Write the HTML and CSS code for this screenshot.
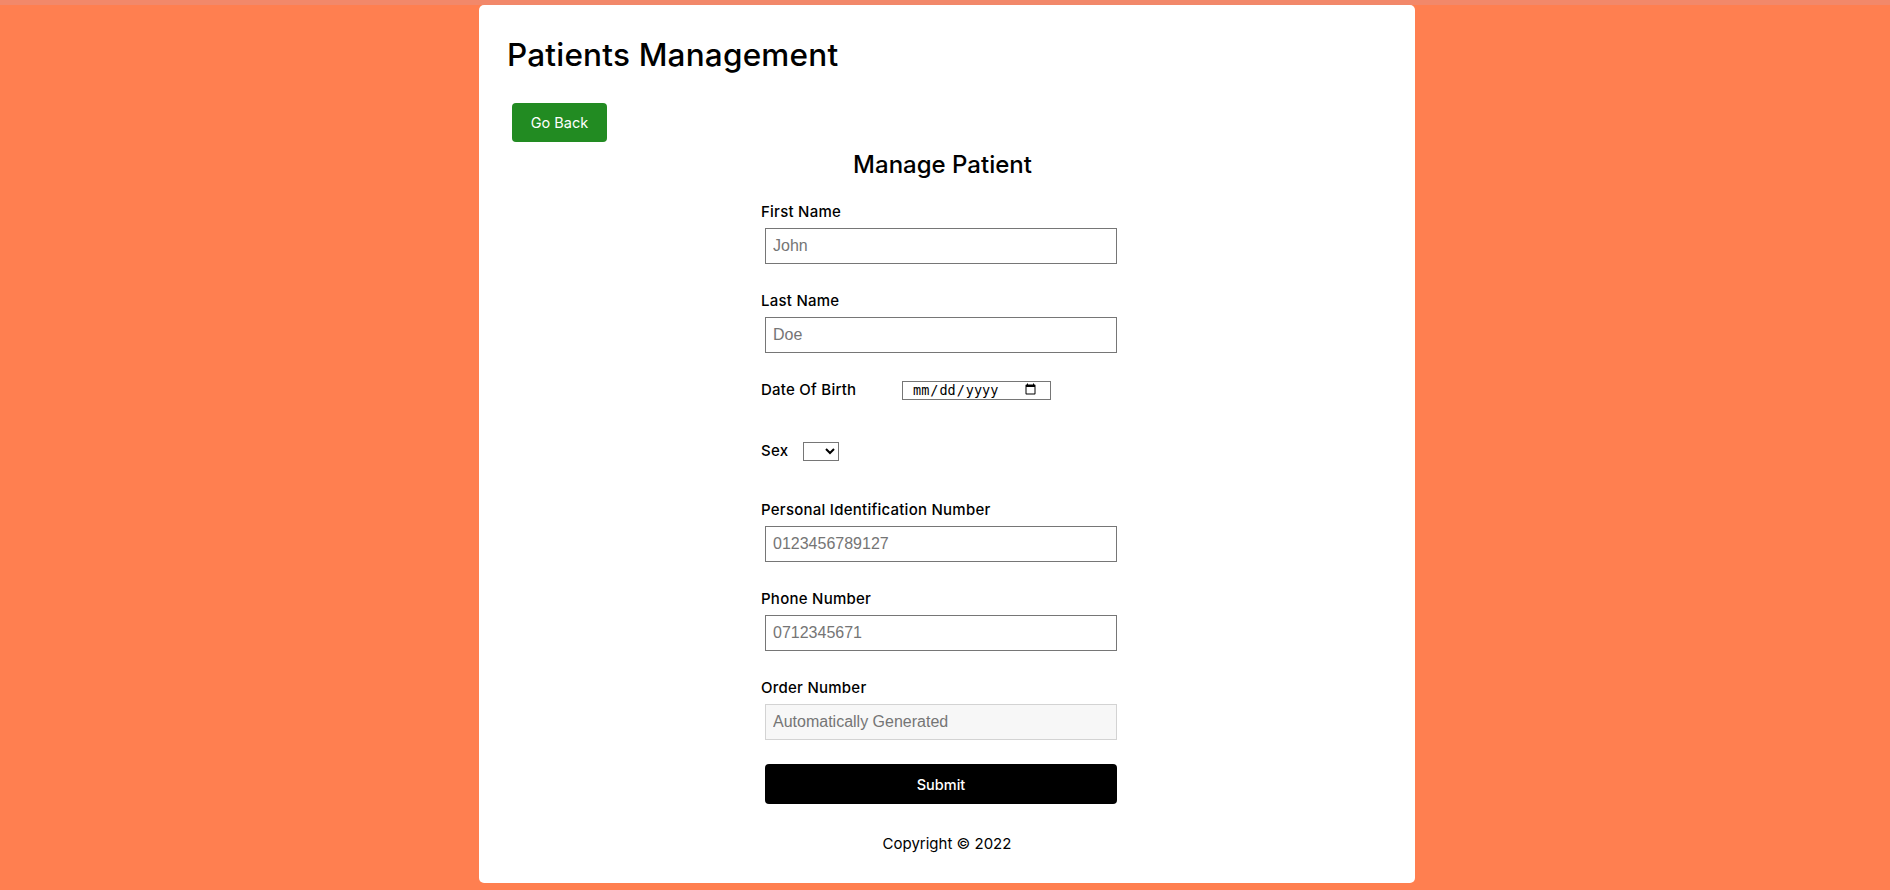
FILE: index.html
```html
<!DOCTYPE html>
<html lang="en">
<head>
<meta charset="utf-8">
<title>Patients Management</title>
<link rel="stylesheet" href="styles.css">
</head>
<body>
<div class="card">
  <h1 class="title">Patients Management</h1>
  <button class="back" type="button">Go Back</button>
  <form class="form">
    <h2 class="form-title">Manage Patient</h2>
    <div class="field">
      <label class="lbl">First Name</label>
      <input class="txt" type="text" placeholder="John">
    </div>
    <div class="field">
      <label class="lbl">Last Name</label>
      <input class="txt" type="text" placeholder="Doe">
    </div>
    <div class="row row-dob">
      <label class="lbl lbl-dob">Date Of Birth</label>
      <input class="date" type="date">
    </div>
    <div class="row row-sex">
      <label class="lbl lbl-sex">Sex</label>
      <select class="sel"></select>
    </div>
    <div class="field">
      <label class="lbl">Personal Identification Number</label>
      <input class="txt" type="text" placeholder="0123456789127">
    </div>
    <div class="field">
      <label class="lbl">Phone Number</label>
      <input class="txt" type="text" placeholder="0712345671">
    </div>
    <div class="field field-last">
      <label class="lbl">Order Number</label>
      <input class="txt" type="text" placeholder="Automatically Generated" disabled>
    </div>
    <button class="submit" type="button">Submit</button>
  </form>
  <footer class="copy">Copyright © 2022</footer>
</div>
</body>
</html>
```

FILE: styles.css
```css
html, body {
  margin: 0;
  padding: 0;
}
body {
  background: linear-gradient(#f2886a 0, #f2886a 5px, #ff7f50 5px) #ff7f50;
  padding: 5px 0 7px 4px;
  font-family: Inter, "Noto Sans", sans-serif;
  color: #000;
  box-sizing: border-box;
  height: 890px;
  overflow: hidden;
}
.card {
  width: 936px;
  height: 878px;
  margin: 0 auto;
  background: #fff;
  border-radius: 5px;
  padding: 30px 28px 0;
  box-sizing: border-box;
}
.title {
  margin: 0;
  font-size: 31.5px;
  font-weight: 500;
  line-height: 40px;
  letter-spacing: 0.2px;
}
.back {
  display: block;
  margin: 28px 0 0 5px;
  width: 95px;
  height: 39px;
  border: 0;
  border-radius: 4px;
  background: #228b22;
  color: #fff;
  font-family: Inter, "Noto Sans", sans-serif;
  font-size: 14.5px;
  font-weight: 400;
}
.form {
  display: block;
  width: 363px;
  margin: 8px 0 0 254px;
}
.form-title {
  margin: 0 0 21px;
  text-align: center;
  font-size: 24px;
  font-weight: 500;
  line-height: 30px;
}
.lbl {
  display: block;
  font-size: 15px;
  font-weight: 500;
  line-height: 22px;
  letter-spacing: 0.25px;
}
.field {
  margin-bottom: 26px;
}
.txt {
  display: block;
  box-sizing: border-box;
  width: 352px;
  height: 36px;
  margin: 5px 0 0 4px;
  padding: 0 7px;
  border: 1px solid #767676;
  border-radius: 0;
  font-family: "Liberation Sans", Arial, sans-serif;
  font-size: 16px;
  background: #fff;
}
.txt::placeholder {
  color: #757575;
}
.txt:disabled {
  background: #f7f7f7;
  border-color: #d3d3d3;
}
.field-last {
  margin-bottom: 24px;
}
.row {
  display: flex;
  align-items: center;
  height: 22px;
}
.row-dob {
  margin: 2px 0 39px;
}
.row-sex {
  margin-bottom: 37px;
}
.lbl-dob {
  width: 141px;
  flex: none;
}
.lbl-sex {
  width: 42px;
  flex: none;
}
.date {
  box-sizing: border-box;
  width: 149px;
  height: 19px;
  margin: 0;
  padding: 0 11px 0 9px;
  border: 1px solid #767676;
  border-radius: 0;
  font-family: "DejaVu Sans Mono", monospace;
  font-size: 13.5px;
  color: #000;
  background: #fff;
}
.sel {
  box-sizing: border-box;
  width: 36px;
  height: 19px;
  margin: 0;
  border: 1px solid #767676;
  border-radius: 0;
  background: #fff;
  font-size: 13px;
}
.submit {
  display: block;
  width: 352px;
  height: 40px;
  margin: 0 0 0 4px;
  border: 0;
  border-radius: 4px;
  background: #000;
  color: #fff;
  font-family: Inter, "Noto Sans", sans-serif;
  font-size: 14.5px;
  font-weight: 500;
}
.copy {
  margin-top: 28px;
  text-align: center;
  font-size: 15px;
  line-height: 24px;
}
```
